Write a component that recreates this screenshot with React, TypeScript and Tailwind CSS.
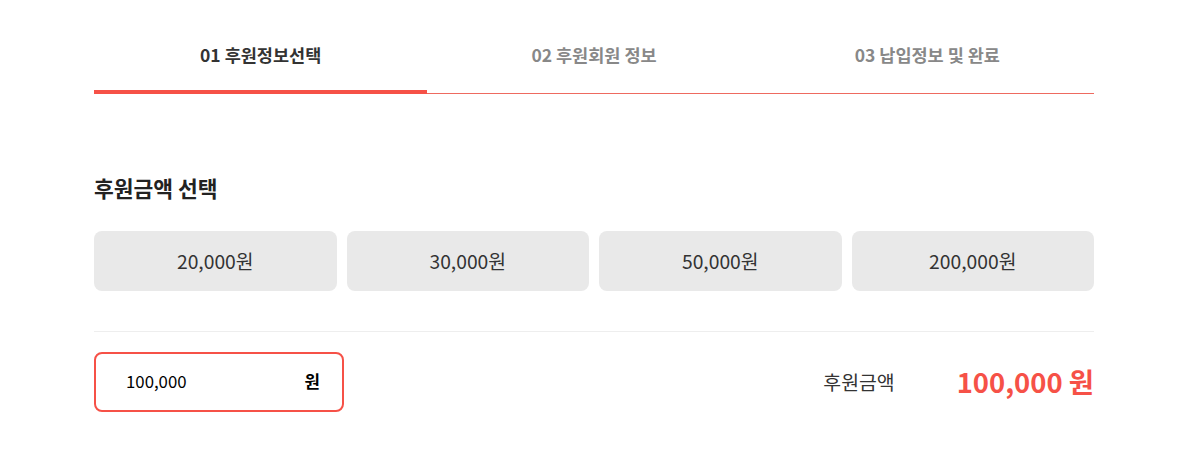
import React from "react";

export default function App() {
  const amounts = ["20,000원", "30,000원", "50,000원", "200,000원"];
  return (
    <div
      className="w-[1180px] h-[451px] bg-white"
      style={{ fontFamily: '"Noto Sans CJK KR", "Noto Sans", sans-serif' }}
    >
      <div className="w-[1000px] ml-[94px] pt-[40px]">
        <div className="relative grid grid-cols-3 border-b border-[#ee6a60]">
          <div className="flex flex-col items-center">
            <span className="text-[17.5px] leading-[30px] font-bold text-[#333]">01 후원정보선택</span>
            <div className="mt-[20px] w-full h-[4px] bg-[#f65147] -mb-[1px]" />
          </div>
          <div className="flex flex-col items-center">
            <span className="text-[17.5px] leading-[30px] font-bold text-[#888]">02 후원회원 정보</span>
          </div>
          <div className="flex flex-col items-center">
            <span className="text-[17.5px] leading-[30px] font-bold text-[#888]">03 납입정보 및 완료</span>
          </div>
        </div>

        <h2 className="mt-[76px] text-[21.5px] leading-[36px] font-bold text-[#222]">후원금액 선택</h2>

        <div className="mt-[25px] grid grid-cols-4 gap-[10px]">
          {amounts.map((a) => (
            <div
              key={a}
              className="h-[60px] rounded-[8px] bg-[#e9e9e9] flex items-center justify-center text-[19.3px] text-[#333]"
            >
              {a}
            </div>
          ))}
        </div>

        <div className="mt-[40px] border-t border-[#eeeeee]" />

        <div className="mt-[20px] flex items-center justify-between">
          <div className="w-[250px] h-[60px] border-2 border-[#f65147] rounded-[8px] flex items-center justify-between pl-[30px] pr-[22px]">
            <span className="text-[16.8px] text-black">100,000</span>
            <span className="text-[16.8px] font-bold text-black">원</span>
          </div>
          <div className="flex items-center">
            <span className="text-[19.4px] text-[#333]">후원금액</span>
            <span className="ml-[62px] text-[27.4px] font-bold text-[#f65147]">100,000 원</span>
          </div>
        </div>
      </div>
    </div>
  );
}
